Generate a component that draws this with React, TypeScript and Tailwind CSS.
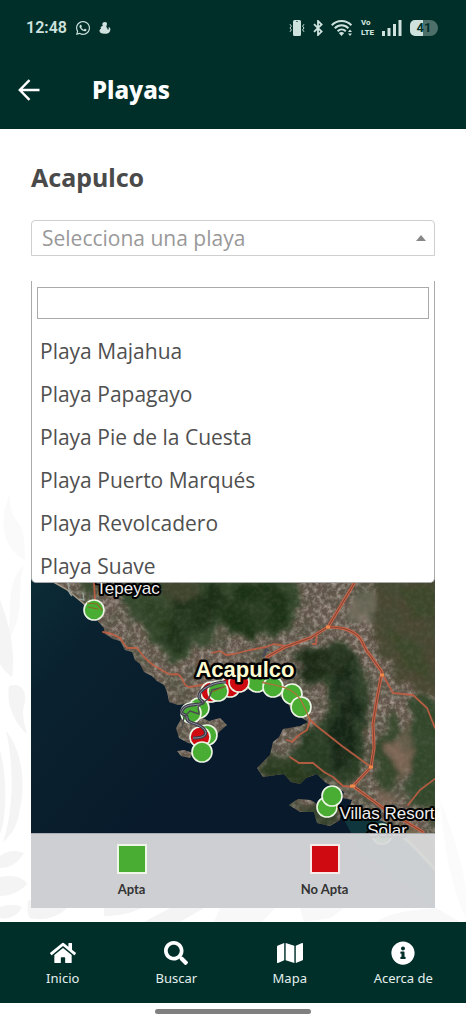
import React, { useState } from 'react';
import {
  FaHome,
  FaInfoCircle,
  FaMap,
  FaSearch,
  FaWhatsapp,
} from 'react-icons/fa';

const beaches = [
  'Playa Majahua',
  'Playa Papagayo',
  'Playa Pie de la Cuesta',
  'Playa Puerto Marqués',
  'Playa Revolcadero',
  'Playa Suave',
];

const navItems = [
  { href: '#inicio', icon: FaHome, label: 'Inicio' },
  { href: '#buscar', icon: FaSearch, label: 'Buscar' },
  { href: '#mapa', icon: FaMap, label: 'Mapa' },
  { href: '#acerca', icon: FaInfoCircle, label: 'Acerca de' },
];

const GREEN = '#4aad33';
const RED = '#cf0a10';

// Drawn in order, later markers cover earlier ones
const markers = [
  { x: 94, y: 610, fill: GREEN },
  { x: 211, y: 692, fill: RED },
  { x: 230, y: 687, fill: RED },
  { x: 218, y: 691, fill: GREEN },
  { x: 257, y: 682, fill: GREEN },
  { x: 239, y: 682, fill: RED },
  { x: 273, y: 687, fill: GREEN },
  { x: 292, y: 694, fill: GREEN },
  { x: 301, y: 707, fill: GREEN },
  { x: 199, y: 708, fill: GREEN },
  { x: 191, y: 713, fill: GREEN },
  { x: 207, y: 735, fill: GREEN },
  { x: 200, y: 737, fill: RED },
  { x: 202, y: 752, fill: GREEN },
  { x: 327, y: 807, fill: GREEN },
  { x: 332, y: 796, fill: GREEN },
];

const land =
  'M31 566 L50 580 L66 589 L83 603 L95 618 L104 628 L105 634 L113 639 L120 641 L125 650 L132 652 L135 660 L140 664 L144 672 L152 676 L157 681 L164 685 L167 692 L169 702 L178 705 L187 704 L185 710 L180 721 L176 728 L179 738 L188 743 L199 745 L213 738 L220 731 L227 725 L220 718 L209 721 L200 717 L206 705 L220 698 L234 692 L250 689 L268 692 L284 698 L293 712 L308 722 L300 726 L283 729 L279 737 L273 742 L270 755 L257 768 L263 777 L276 775 L284 774 L291 782 L300 784 L306 778 L317 774 L326 783 L338 788 L344 792 L342 798 L352 800 L348 812 L365 816 L385 822 L400 835 L420 855 L435 870 L436 281 L31 281 Z';

const highways = [
  'M368 560 L352 587 L328 627 L310 638 L285 647 L267 657',
  'M328 627 C345 627 352 631 358 636 C364 642 363 648 370 655 L382 672 L377 698 L373 724 L374 748 L371 767 L353 786 L383 808 L423 832',
];

const streets = [
  'M313 723 L342 746 L371 767',
  'M257 682 C270 684 281 685 290 689 C305 697 305 710 310 720 L314 723',
  'M212 653 L220 651 L226 655 L234 654 L250 650 L266 647 L274 644 L285 646',
  'M103 632 L112 634 L120 638 L127 648 L137 648 L145 658 L153 665 C166 672 168 676 177 674 C185 677 182 687 190 687 L207 684 L222 683',
  'M383 675 L393 693 L413 695 L427 708 L435 728',
  'M310 720 L307 730 L299 735 L292 742 L287 740',
  'M290 757 L299 763 L313 763 L324 772 L333 777 L343 786 L352 787',
  'M436 778 L420 790 L408 805',
  'M317 633 L316 644 L313 644',
  'M94 583 L95 600',
];

const overpass =
  'M226 682 C214 682 203 688 200 693 C196 701 205 700 203 703 C196 706 188 703 183 709 C178 716 188 713 187 718 C187 724 197 722 204 729 C209 736 202 738 193 738';

const VibrateIcon = () => (
  <svg viewBox="0 0 16 16" className="size-4" fill="currentColor" aria-hidden="true">
    <path fillRule="evenodd" d="M5.5 0 h5 a1.5 1.5 0 0 1 1.5 1.5 v13 a1.5 1.5 0 0 1 -1.5 1.5 h-5 a1.5 1.5 0 0 1 -1.5 -1.5 v-13 a1.5 1.5 0 0 1 1.5 -1.5 Z M7.4 1 v1 h1.2 v-1 Z" />
    <path d="M1 4.2 L2.4 6.2 L1 8 L2.4 9.8 L1 11.8 M15 4.2 L13.6 6.2 L15 8 L13.6 9.8 L15 11.8" fill="none" stroke="currentColor" />
  </svg>
);

const BluetoothIcon = () => (
  <svg viewBox="0 0 10 16" className="ml-2 h-4 w-2.5" fill="none" stroke="currentColor" strokeWidth="1.8" aria-hidden="true">
    <path d="M1 4.2 L8.6 11.6 L5 15 V1 L8.6 4.4 L1 11.8" />
  </svg>
);

const WifiIcon = () => (
  <svg viewBox="0 0 22 16" className="ml-2 h-4 w-[22px]" fill="none" stroke="currentColor" strokeWidth="2" aria-hidden="true">
    <path d="M.8 5.2 C6 -.4 15 -.4 20.4 5.2 M3.8 8.2 C7.6 4.2 13.6 4.2 17.4 8.2 M6.6 11.2 C9 8.8 12.4 8.8 14.8 11.2" />
    <path d="M7.8 13 Q10.6 10.8 13.2 13 L10.5 16 Z M17 12 L19 9.5 L21 12 Z M17 13.5 L21 13.5 L19 16 Z" fill="currentColor" stroke="none" />
  </svg>
);

const StatusBar = () => (
  <div className="flex h-14 items-center justify-between pr-7 pl-[26px] text-[#cfe2dd]">
    <div className="flex items-center">
      <span className="font-['Roboto',sans-serif] text-base leading-5 font-semibold">12:48</span>
      <FaWhatsapp className="ml-2 size-4" />
      <svg viewBox="0 0 12 13" className="ml-2 h-3 w-3" fill="currentColor" aria-hidden="true">
        <path d="M3 2.8 C3 .8 4.4 0 6 0 C7.8 0 8.6 1.4 8 3 C7.7 4 7.2 4.6 7.6 5.6 C8.2 6.4 9 7 8.8 8.2 C10.2 8.6 10.4 7 9.8 5.4 C11.8 5.8 12.4 8 11.4 10 C10.4 12.4 7.8 13 5.2 12.8 C2.2 12.8 0 11.8 0 9.6 C0 8.4 .8 7.6 1.8 7.2 C1 6.6 1.2 5.4 2 5 C3 4.6 3.6 4.4 3.6 3.6 Z" />
      </svg>
    </div>
    <div className="flex items-center">
      <VibrateIcon />
      <BluetoothIcon />
      <WifiIcon />
      <span className="ml-2 flex flex-col font-['Roboto',sans-serif] text-[8px] leading-[10px] font-extrabold">
        <span>Vo</span>
        <span>LTE</span>
      </span>
      <svg viewBox="0 0 20 16" className="ml-2 h-4 w-5" fill="currentColor" aria-hidden="true">
        <path d="M0 11 h3 v5 h-3 Z M5.5 8 h3 v8 h-3 Z M11 4 h3 v12 h-3 Z M16.5 0 h3 v16 h-3 Z" />
      </svg>
      <span className="ml-2 flex h-4 w-7 items-center justify-center rounded-[5px] rounded-r-lg bg-linear-to-r from-[#cfe2dd] from-45% to-[#4d716a] to-45% font-['Roboto',sans-serif] text-[13px] font-bold text-[#002f2a]">
        41
      </span>
    </div>
  </div>
);

const Watermark = () => (
  <svg
    viewBox="0 0 466 622"
    className="pointer-events-none absolute bottom-0 left-0 w-full"
    fill="#f4f4f4"
    aria-hidden="true"
  >
    <g transform="translate(0 -300)">
      <path d="M10 494 C-2 520 2 548 25 560 C25 540 24 528 16 520 C10 512 10 504 10 494 Z" fill="#fafafa" />
      <path d="M24 566 C6 580 12 610 8 640 C18 626 20 610 20 596 C21 584 20 576 24 566 Z" fill="#f9f9f9" />
      <path d="M0 600 C8 620 16 650 12 677 C6 672 2 668 0 664 Z" />
      <path d="M9 686 C20 682 27 690 25 702 C21 712 24 722 27 734 C14 722 6 704 9 686 Z" />
      <path d="M6 731 C22 750 26 785 20 808 C18 826 12 834 3 842 C14 810 14 764 6 731 Z" />
      <path d="M0 750 C8 780 6 820 0 834 Z" />
      <path d="M0 856 C8 850 16 850 24 853 C18 864 8 868 0 868 Z" />
      <path d="M0 877 C14 874 24 878 27 884 C20 892 10 896 0 896 Z" />
      <path d="M0 907 C8 904 16 904 22 907 C18 916 8 920 0 918 Z" />
      <path d="M28 900 L60 906 L68 907 C58 918 42 921 30 918 C27 914 27 908 28 900 Z" />
      <path d="M104 908 L142 908 C130 914 116 916 104 916 Z" />
      <path d="M170 908 L204 908 L180 922 L144 922 Z" />
      <path d="M220 908 L275 908 L262 922 L214 922 Z" fill="#f8f8f8" />
      <path d="M300 908 L344 908 L330 918 L304 922 Z" fill="#f8f8f8" />
      <path d="M376 922 C390 912 412 910 436 908 L460 922 Z" fill="#f8f8f8" />
      <path d="M440 800 C452 830 462 860 466 890 L466 918 C452 890 444 850 440 800 Z" fill="#fbfbfb" />
    </g>
  </svg>
);

const BeachMap = () => (
  <svg viewBox="31 281 404 627" className="block w-full" role="img" aria-label="Mapa de Acapulco">
    <defs>
      <linearGradient id="sea" x1="0" y1="0.45" x2="0.3" y2="0.85">
        <stop offset="0" stopColor="#0b2d36" />
        <stop offset="0.35" stopColor="#0a2230" />
        <stop offset="1" stopColor="#081a2b" />
      </linearGradient>
      {/* Light speckle of the built-up areas */}
      <filter id="grain" x="0" y="0" width="1" height="1">
        <feTurbulence type="fractalNoise" baseFrequency="0.22" numOctaves="4" seed="8" />
        <feColorMatrix values="0 0 0 0 0.62  0 0 0 0 0.56  0 0 0 0 0.5  1.8 0 0 0 -0.7" />
      </filter>
      {/* Dark relief */}
      <filter id="shade" x="0" y="0" width="1" height="1">
        <feTurbulence type="fractalNoise" baseFrequency="0.04" numOctaves="5" seed="21" />
        <feColorMatrix values="0 0 0 0 0.05  0 0 0 0 0.08  0 0 0 0 0.04  0 3 0 0 -1.2" />
      </filter>
      <filter id="rough" x="-20%" y="-20%" width="140%" height="140%">
        <feTurbulence type="fractalNoise" baseFrequency="0.05" numOctaves="4" seed="4" />
        <feDisplacementMap in="SourceGraphic" scale="26" xChannelSelector="R" yChannelSelector="G" />
        <feGaussianBlur stdDeviation="2.5" />
      </filter>
      <clipPath id="land-clip">
        <path d={land} />
        <path d="M289 805 L298 799 L311 800 L318 805 L330 799 L341 808 L340 820 L330 826 L317 823 L314 812 L300 812 Z" />
        <path d="M177 751 L184 750 L193 753 L190 758 L181 756 Z" />
      </clipPath>
    </defs>

    <rect x="31" y="281" width="404" height="627" fill="url(#sea)" />
    <path d="M340 812 L390 820 L440 872 L435 908 L360 850 Z" fill="#0f363d" />

    <g clipPath="url(#land-clip)">
      <rect x="31" y="281" width="404" height="627" fill="#64574c" />
      <rect x="31" y="560" width="404" height="348" filter="url(#grain)" opacity="0.7" />
      <g filter="url(#rough)">
        <path d="M74 572 L92 572 L94 585 L84 597 Z" fill="#34472a" />
        <path d="M124 566 L282 566 L302 602 L292 628 L262 638 L232 634 L214 624 L204 644 L188 660 L168 660 L152 644 L142 624 L122 612 Z" fill="#33462a" />
        <path d="M160 576 L200 572 L196 600 L166 606 Z" fill="#41452e" />
        <path d="M176 604 L214 588 L232 602 L204 624 L190 650 L170 652 L158 638 Z" fill="#1b2f18" />
        <path d="M230 590 L262 582 L292 604 L286 626 L260 636 L232 630 L216 614 Z" fill="#1c3018" />
        <path d="M146 600 L176 612 L160 626 L140 612 Z" fill="#263a1f" />
        <path d="M294 652 L334 644 L360 658 L370 694 L366 728 L368 752 L350 782 L318 780 L302 766 L286 750 L320 726 L328 690 L302 676 Z" fill="#283b23" />
        <path d="M334 672 L354 674 L360 720 L348 762 L326 768 L334 724 Z" fill="#172519" />
        <path d="M296 656 L330 648 L352 660 L334 680 L302 676 Z" fill="#1b2b19" />
        <path d="M264 752 L300 758 L322 776 L300 788 L262 776 Z" fill="#26371f" />
        <path d="M378 566 L456 566 L456 700 L420 690 L396 684 L380 652 L370 620 Z" fill="#494630" />
        <path d="M404 590 L432 584 L440 616 L412 620 Z M388 630 L412 638 L436 670 L410 672 Z" fill="#3c4629" />
        <path d="M416 690 L452 720 L452 830 L412 804 L410 740 Z" fill="#33472a" />
        <path d="M378 740 L388 704 L400 722 L392 760 L400 790 L374 784 Z" fill="#35462a" />
        <path d="M350 604 L362 590 L376 598 L370 624 L352 624 Z" fill="#7b7265" />
        <path d="M390 742 L408 730 L414 738 L412 772 L396 780 Z" fill="#7d6655" />
        <path d="M370 792 L388 788 L402 800 L384 806 Z" fill="#776353" />
        <path d="M286 806 L316 802 L344 808 L330 830 Z" fill="#35402b" />
        <path d="M394 835 L412 826 L440 850 L440 880 Z" fill="#7a6b4e" />
      </g>
      <rect x="31" y="560" width="404" height="348" filter="url(#shade)" opacity="0.4" />
      <rect x="31" y="560" width="404" height="348" filter="url(#grain)" opacity="0.1" />
    </g>
    <path d="M31 566 L50 580 L66 589 L83 603 L90 610" fill="none" stroke="#a79a86" strokeWidth="1.5" />
    <path d="M400 835 C412 842 424 858 436 870" fill="none" stroke="#cbb891" strokeWidth="3" />

    <g fill="none" strokeLinejoin="round" strokeLinecap="round">
      {streets.map((d) => (
        <path key={d} d={d} stroke="#c05e44" strokeWidth="1.8" opacity="0.9" />
      ))}
      {highways.map((d) => (
        <path key={d} d={d} stroke="#c46349" strokeWidth="3.2" />
      ))}
      {highways.map((d) => (
        <path key={d} d={d} stroke="#84432f" strokeWidth="1" />
      ))}
    </g>
    <path d="M326 627 h4 M380 675 h4 M369 767 h4 M350 786 h5" stroke="#f08a4a" strokeWidth="3" />

    {markers.map((m) => (
      <circle key={`${m.x}-${m.y}`} cx={m.x} cy={m.y} r="10" fill={m.fill} stroke="#edf6e6" strokeWidth="1.6" />
    ))}
    <circle cx="382" cy="834" r="10" fill={GREEN} stroke="#edf6e6" strokeWidth="1.6" />

    {/* Roads that run over the markers */}
    <g fill="none" strokeLinejoin="round">
      <path d={overpass} stroke="#3c3e4c" strokeWidth="3.2" />
      <path d={overpass} stroke="#8e8d99" strokeWidth="1" />
      <path d="M224 687 L212 690 L209 698 L198 707 L199 714 L190 711 L184 717 L182 728" stroke="#4b4a50" strokeWidth="1.4" />
      <path d="M66 577 C72 590 66 591 72 596 M83 593 L84 600 L79 599" stroke="#96a09a" strokeWidth="1.4" />
      <path d="M87 603 L97 604 L102 610 M88 607 L98 609 M212 692 L226 686" stroke="#8b6a26" strokeWidth="1.2" />
      <path d="M262 682 C270 685 281 685 290 690 C301 696 304 706 309 718" stroke="#a9753c" strokeWidth="1.4" />
      <path d="M263 657 L266 650 L269 650" stroke="#4a4a58" strokeWidth="2.5" />
    </g>

    <g
      className="font-['Liberation_Sans',Arial,sans-serif]"
      stroke="#000"
      strokeWidth="4"
      strokeLinejoin="round"
      paintOrder="stroke"
      textAnchor="middle"
      fontSize="17"
      fill="#eee"
    >
      <text x="128" y="594">Tepeyac</text>
      <text x="245" y="677" fontSize="22" fontWeight="700" fill="#fdfbd0" strokeWidth="5">Acapulco</text>
      <text x="387" y="819">Villas Resort</text>
      <text x="387" y="836">Solar</text>
    </g>
  </svg>
);

const Legend = () => (
  <ul className="absolute inset-x-0 bottom-0 grid h-[75px] grid-cols-2 border-t border-[#a9adb0] bg-[#d8d9db]/95 pt-2.5 pr-3.5 pl-1 font-['Lato',sans-serif] text-[13px] leading-4 font-bold text-[#333]">
    <li className="flex flex-col items-center gap-[7px]">
      <span className="size-[30px] border-2 border-[#eef6ea] bg-[#4aad33]" />
      Apta
    </li>
    <li className="flex flex-col items-center gap-[7px]">
      <span className="size-[30px] border-2 border-[#f8e9e9] bg-[#cf0a10]" />
      No Apta
    </li>
  </ul>
);

const App = () => {
  const [beach, setBeach] = useState('');
  const [query, setQuery] = useState('');

  const results = beaches.filter((b) => b.toLowerCase().includes(query.toLowerCase()));

  return (
    <div className="flex min-h-screen flex-col bg-white font-['Noto_Sans',sans-serif]">
      <header className="bg-[#002f2a] pb-[15px]">
        <StatusBar />
        <div className="flex h-[58px] items-center pt-2.5 pl-[18px] text-white">
          <button type="button" aria-label="Regresar">
            <svg viewBox="0 0 22 22" className="size-[22px]" fill="none" stroke="currentColor" strokeWidth="2.4" aria-hidden="true">
              <path d="M21.5 11 H2 M11.5 1.2 L1.8 11 L11.5 20.8" />
            </svg>
          </button>
          <h1 className="ml-[52px] text-2xl font-extrabold">Playas</h1>
        </div>
      </header>

      <main className="relative flex-1 px-[31px] pt-8 pb-3.5">
        <Watermark />
        <div className="relative">
          <h2 className="text-[25px] leading-8 font-bold text-[#4a4a4a]">Acapulco</h2>

          <div className="relative mt-[27px]">
            <select
              aria-label="Selecciona una playa"
              value={beach}
              onChange={(e) => setBeach(e.target.value)}
              className="block h-9 w-full appearance-none rounded-t border border-[#cfcfcf] bg-white pr-8 pl-2.5 font-['Open_Sans',sans-serif] text-[21px] leading-8 text-[#999] outline-none"
            >
              <option value="">Selecciona una playa</option>
              {beaches.map((b) => (
                <option key={b} value={b}>{b}</option>
              ))}
            </select>
            <svg viewBox="0 0 10 6" className="pointer-events-none absolute top-[15px] right-[9px] h-1.5 w-2.5" fill="#888" aria-hidden="true">
              <path d="M0 6 L5 0 L10 6 Z" />
            </svg>
          </div>

          <div className="relative mt-[25px]">
            <BeachMap />
            <Legend />
            <div className="absolute inset-x-0 top-0 flex h-[302px] flex-col overflow-hidden rounded-b-[5px] border border-t-0 border-[#aaa] bg-white px-[5px] pt-1.5">
              <input
                type="text"
                aria-label="Buscar playa"
                value={query}
                onChange={(e) => setQuery(e.target.value)}
                className="h-8 w-full shrink-0 border border-[#aaa] px-1 text-xl outline-none"
              />
              <ul className="mt-[11px] overflow-y-auto [scrollbar-width:none]">
                {results.map((b) => (
                  <li key={b}>
                    <button
                      type="button"
                      onClick={() => setBeach(b)}
                      className="block h-[43px] w-full px-[3px] text-left font-['Open_Sans',sans-serif] text-[21px] text-[#505050]"
                    >
                      {b}
                    </button>
                  </li>
                ))}
              </ul>
            </div>
          </div>
        </div>
      </main>

      <nav className="bg-[#002f2a] px-1.5">
        <ul className="grid h-[81px] grid-cols-4">
          {navItems.map((item) => (
            <li key={item.label}>
              <a href={item.href} className="flex flex-col items-center gap-0.5 pt-[18px] text-[13px] leading-5 text-[#e4f0ed]">
                <item.icon className="h-[26px] w-7 p-px text-white" />
                {item.label}
              </a>
            </li>
          ))}
        </ul>
      </nav>
      <div className="flex h-[21px] items-center justify-center bg-white">
        <span className="mb-1 h-[5px] w-1/3 rounded-full bg-[#808080]" />
      </div>
    </div>
  );
};

export default App;
